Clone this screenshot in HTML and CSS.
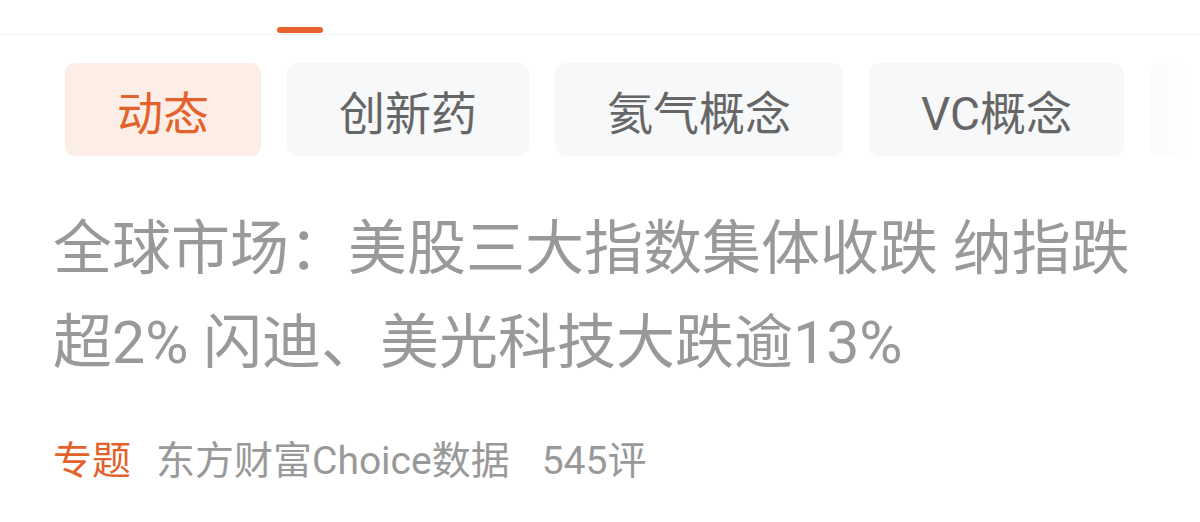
FILE: index.html
```html
<!DOCTYPE html>
<html lang="zh-CN">
<head>
  <meta charset="UTF-8">
  <meta name="viewport" content="width=device-width, initial-scale=1">
  <title>资讯</title>
  <link rel="stylesheet" href="styles.css">
</head>
<body>

  <!-- 顶部频道栏（只露出下划线） -->
  <div class="channel-bar">
    <span class="channel-indicator"></span>
  </div>

  <!-- 分类标签 -->
  <div class="tag-row">
    <div class="tag-list">
      <a href="#" class="tag active">动态</a>
      <a href="#" class="tag">创新药</a>
      <a href="#" class="tag">氦气概念</a>
      <a href="#" class="tag">VC概念</a>
      <!-- 右侧被渐隐遮住的下一个标签 -->
      <a href="#" class="tag tag-more"></a>
    </div>
  </div>

  <!-- 资讯条目 -->
  <div class="news-item">
    <h2 class="news-title">全球市场：美股三大指数集体收跌 纳指跌超2% 闪迪、美光科技大跌逾13%</h2>
    <div class="news-meta">
      <span class="meta-tag">专题</span>
      <span class="meta-source">东方财富Choice数据</span>
      <span class="meta-count">545评</span>
    </div>
  </div>

</body>
</html>
```

FILE: styles.css
```css
/* 基础 */
body {
  margin: 0;
  background-color: #fff;
  font-family: Roboto, "Noto Sans CJK SC", sans-serif;
  overflow: hidden;
}

/* 顶部频道栏 */
.channel-bar {
  height: 34px;
  display: flex;
  align-items: flex-end;
  padding-left: 277px;
  border-bottom: 1px solid #f2f2f2;
}

.channel-indicator {
  width: 46px;
  height: 6px;
  margin-bottom: 1px;
  border-radius: 3px;
  background-color: #e8612c;
}

/* 分类标签 */
.tag-row {
  position: relative;
  margin-top: 28px;
  overflow: hidden;
}

.tag-row::after {
  content: "";
  position: absolute;
  top: 0;
  right: 0;
  width: 62px;
  height: 100%;
  background: linear-gradient(to right, rgba(255, 255, 255, 0.2), #fff 80%);
}

.tag-list {
  display: flex;
  gap: 26px;
  padding-left: 65px;
  white-space: nowrap;
}

.tag {
  flex-shrink: 0;
  height: 93px;
  padding: 0 52px;
  display: flex;
  align-items: center;
  border-radius: 10px;
  background-color: #f7f8fa;
  color: #666;
  font-size: 46px;
  text-decoration: none;
}

.tag.active {
  background-color: #fcede6;
  color: #e3622b;
}

.tag-more {
  width: 120px;
}

/* 资讯条目 */
.news-item {
  padding: 0 53px;
}

.news-title {
  margin: 46px 0 0;
  font-size: 59px;
  font-weight: normal;
  line-height: 94px;
  color: #999;
}

.news-meta {
  margin-top: 42px;
  display: flex;
  align-items: center;
  gap: 25px;
  height: 50px;
  font-size: 39px;
  color: #999;
}

.meta-tag {
  color: #e3622b;
}

.meta-count {
  margin-left: 7px;
}
```
